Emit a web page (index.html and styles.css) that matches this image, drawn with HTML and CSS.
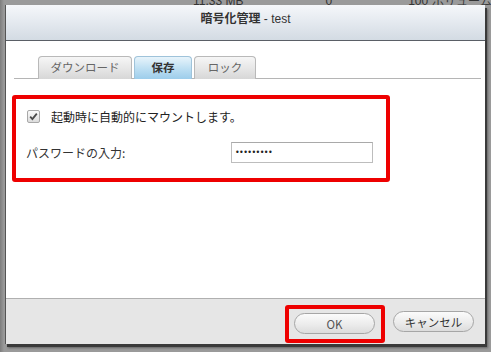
FILE: index.html
```html
<!DOCTYPE html>
<html lang="ja">
<head>
<meta charset="utf-8">
<title>暗号化管理 - test</title>
<link rel="stylesheet" href="styles.css">
</head>
<body>
<div class="backdrop">
  <div class="bg-row">
    <span class="bg-size">11.33 MB</span>
    <span class="bg-zero">0</span>
    <span class="bg-pct">100 ボリューム</span>
  </div>
</div>
<div class="dialog">
  <div class="titlebar"><span class="title-jp">暗号化管理</span> - test</div>
  <div class="body">
    <div class="tabs">
      <div class="tab">ダウンロード</div>
      <div class="tab active">保存</div>
      <div class="tab">ロック</div>
    </div>
    <div class="panel">
      <div class="form-box">
        <label class="check-row">
          <span class="checkbox"><svg width="9" height="9" viewBox="0 0 9 9"><path d="M1.2 4.6 L3.4 7 L7.8 1.6" fill="none" stroke="#4a4a4a" stroke-width="1.8"/></svg></span>
          <span>起動時に自動的にマウントします。</span>
        </label>
        <div class="pw-row">
          <span class="pw-label">パスワードの入力:</span>
          <div class="pw-input">•••••••••</div>
        </div>
      </div>
    </div>
  </div>
  <div class="footer">
    <div class="ok-wrap"><button class="btn">OK</button></div>
    <button class="btn">キャンセル</button>
  </div>
</div>
</body>
</html>
```
FILE: styles.css
```css
html, body {
  margin: 0;
  padding: 0;
}
body {
  width: 491px;
  height: 352px;
  background: #8e8e8e;
  font-family: "Noto Sans CJK JP", "Liberation Sans", sans-serif;
  font-size: 12px;
  color: #222;
  position: relative;
  overflow: hidden;
}
.backdrop {
  height: 352px;
  background: linear-gradient(to right, #7d7d7d 0, #9a9a9a 4px, #9a9a9a 100%);
}
.bg-row {
  display: flex;
  align-items: flex-end;
  font-family: "Liberation Sans", sans-serif;
  font-size: 12px;
  color: #333;
  height: 5px;
  line-height: 8px;
  overflow: hidden;
  white-space: nowrap;
}
.bg-row span { flex-shrink: 0; }
.bg-size { margin-left: 193px; }
.bg-zero { margin-left: 82px; }
.bg-pct { margin-left: 76px; }
.dialog {
  position: absolute;
  left: 5px;
  top: 5px;
  width: 479px;
  height: 339px;
  background: #fff;
  border-left: 1px solid #555;
  box-shadow: 2px 3px 0 #3a3a3a, 3px 4px 2px rgba(0,0,0,0.35);
  display: flex;
  flex-direction: column;
}
.titlebar {
  height: 36px;
  box-sizing: border-box;
  border-bottom: 1px solid #5a5f66;
  background: linear-gradient(to bottom, #f5f7fa 0%, #e4e9ef 50%, #d3dbe3 100%);
  text-align: center;
  line-height: 25px;
  font-size: 12px;
  color: #333;
  font-family: "Liberation Sans", "Noto Sans CJK JP", sans-serif;
}
.title-jp {
  font-family: "Noto Sans CJK JP", sans-serif;
  font-weight: bold;
}
.body {
  flex: 1;
  display: flex;
  flex-direction: column;
}
.tabs {
  display: flex;
  gap: 2px;
  padding: 15px 0 0 24px;
  height: 38px;
  box-sizing: border-box;
  border-bottom: 1px solid #b5b5b5;
  margin: 0 4px 0 8px;
}
.tab {
  height: 23px;
  box-sizing: border-box;
  border: 1px solid #b9b9b9;
  border-bottom: none;
  border-radius: 4px 4px 0 0;
  background: linear-gradient(to bottom, #f6f6f6 0%, #e4e4e4 60%, #d7d7d7 100%);
  color: #666;
  text-align: center;
  line-height: 21px;
  font-size: 11.5px;
  width: 94px;
}
.tab + .tab { width: 58px; }
.tab + .tab + .tab { width: 62px; }
.tab.active {
  background: linear-gradient(to bottom, #e8f4fb 0%, #bfe0f3 50%, #9dcdeb 100%);
  border-color: #9fc3da;
  color: #333;
  font-weight: bold;
}
.panel {
  padding: 16px 0 0 6px;
  flex: 1;
}
.form-box {
  width: 378px;
  height: 87px;
  box-sizing: border-box;
  border: 4px solid #ee0000;
  border-radius: 3px;
  padding: 7px 0 0 10px;
}
.check-row {
  display: flex;
  align-items: center;
  gap: 11px;
  height: 20px;
  font-size: 12px;
  color: #222;
}
.checkbox {
  width: 11px;
  height: 11px;
  border: 1px solid #a8a8a8;
  border-radius: 2px;
  background: linear-gradient(to bottom, #fafafa, #dcdcdc);
  display: flex;
  align-items: center;
  justify-content: center;
  margin-left: 1px;
}
.pw-row {
  display: flex;
  align-items: center;
  margin-top: 15px;
  height: 22px;
}
.pw-label {
  width: 205px;
  color: #333;
  font-size: 12px;
}
.pw-input {
  width: 142px;
  height: 21px;
  box-sizing: border-box;
  border: 1px solid #bdbdbd;
  border-top-color: #a9a9a9;
  padding-left: 3px;
  font-family: "DejaVu Sans", sans-serif;
  font-size: 8px;
  line-height: 19px;
  letter-spacing: -0.6px;
  color: #222;
}
.footer {
  height: 46px;
  box-sizing: border-box;
  border-top: 1px solid #b0b0b0;
  background: #e6e6e6;
  display: flex;
  justify-content: flex-end;
  align-items: center;
  gap: 15px;
  padding-right: 11px;
}
.ok-wrap {
  border: 4px solid #ee0000;
  border-radius: 3px;
  padding: 4px 6px 5px 5px;
  margin-top: 5px;
  margin-right: -7px;
}
.btn {
  width: 81px;
  height: 21px;
  border: 1px solid #a6a6a6;
  border-radius: 11px;
  background: linear-gradient(to bottom, #fbfbfb 0%, #ececec 55%, #dcdcdc 100%);
  font-family: "Noto Sans CJK JP", "Liberation Sans", sans-serif;
  font-size: 11.5px;
  color: #333;
  padding: 0;
  display: block;
}
.ok-wrap .btn { color: #555; }
```
